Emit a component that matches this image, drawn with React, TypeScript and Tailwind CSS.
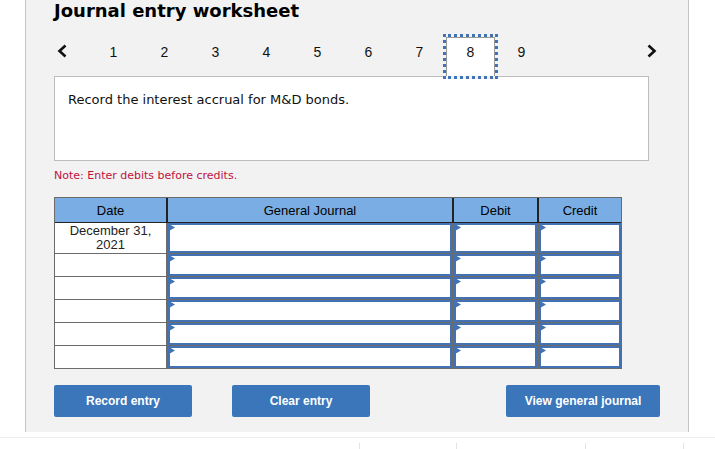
import React from "react";

const Flag = () => (
  <svg className="absolute left-[1px] top-[1px]" width="6" height="7" viewBox="0 0 6 7">
    <polygon points="0,0 6,3.5 0,7" fill="#3f73b6" />
  </svg>
);

const InputCell = ({ w }: { w: string }) => (
  <div className={`relative h-full border-l-2 border-[#6b6b6b] ${w}`}>
    <div className="h-full w-full border-2 border-[#4372b4] bg-white" />
    <Flag />
  </div>
);

const Row = ({ h, date }: { h: string; date?: React.ReactNode }) => (
  <div className={`flex ${h} border-t border-[#6b6b6b]`}>
    <div className="w-[111px] bg-white text-center text-[13px] leading-[15px] text-[#222] pt-[1px]">
      {date}
    </div>
    <InputCell w="w-[286px]" />
    <InputCell w="w-[85px]" />
    <InputCell w="w-[84px]" />
  </div>
);

const Chevron = ({ dir }: { dir: "l" | "r" }) => (
  <svg width="11" height="14" viewBox="0 0 11 14">
    {dir === "l" ? (
      <polyline points="8.5,1.5 2.5,7 8.5,12.5" fill="none" stroke="#111" strokeWidth="2.6" />
    ) : (
      <polyline points="2.5,1.5 8.5,7 2.5,12.5" fill="none" stroke="#111" strokeWidth="2.6" />
    )}
  </svg>
);

export default function App() {
  const nums = [1, 2, 3, 4, 5, 6, 7, 8, 9];
  return (
    <div className="relative w-[715px] h-[449px] bg-white overflow-hidden" style={{ fontFamily: '"Liberation Sans", Arial, sans-serif' }}>
      <div className="ml-[25px] w-[664px] h-[432px] bg-[#f2f2f2] border-x border-[#c6c6c6] pl-[28px]">
        <h1 className="h-[22px] leading-[22px] text-[18px] font-bold text-black" style={{ fontFamily: '"DejaVu Sans", Verdana, sans-serif' }}>
          Journal entry worksheet
        </h1>
        <div className="mt-[12px] flex h-[45px] items-start relative z-10">
          <div className="w-[34px] pl-[3px] pt-[10px] flex items-center">
            <Chevron dir="l" />
          </div>
          {nums.map((n) =>
            n === 8 ? (
              <div key={n} className="mx-[-2px] w-[55px] h-[45px] border-[3px] border-dotted border-[#3f73b6] bg-[#f2f2f2]">
                <div className="w-full h-full border-x border-t border-[#9a9a9a] bg-white text-center pt-[6px] leading-[16px] text-[14px] text-[#111]">
                  {n}
                </div>
              </div>
            ) : (
              <div key={n} className="w-[51px] pt-[10px] leading-[16px] text-center text-[14px] text-[#111]">
                {n}
              </div>
            )
          )}
          <div className="ml-[99px] pt-[10px] flex items-center">
            <Chevron dir="r" />
          </div>
        </div>
        <div className="mt-[-3px] w-[595px] h-[85px] bg-white border border-[#bdbdbd] pl-[13px] pt-[15px] text-[13px] leading-[16px] text-[#111]" style={{ fontFamily: '"DejaVu Sans", Verdana, sans-serif' }}>
          Record the interest accrual for M&amp;D bonds.
        </div>
        <div className="mt-[8px] h-[13px] leading-[13px] text-[11px] text-[#c0113e]" style={{ fontFamily: '"DejaVu Sans", Verdana, sans-serif' }}>
          Note: Enter debits before credits.
        </div>
        <div className="mt-[15px] w-[568px] border-x border-b border-t border-[#6b6b6b]">
          <div className="flex h-[24px] bg-[#7aade3] text-[13px] text-black leading-[25px]">
            <div className="w-[111px] text-center">Date</div>
            <div className="w-[286px] text-center border-l-2 border-[#222]">General Journal</div>
            <div className="w-[85px] text-center border-l-2 border-[#222]">Debit</div>
            <div className="w-[84px] text-center border-l-2 border-[#222]">Credit</div>
          </div>
          <div className="border-t border-[#222]">
            <div className="flex h-[30px]">
              <div className="w-[111px] bg-white text-center text-[13px] leading-[14px] text-[#222] pt-[1px]">
                December 31,
                <br />
                2021
              </div>
              <InputCell w="w-[286px]" />
              <InputCell w="w-[85px]" />
              <InputCell w="w-[84px]" />
            </div>
            <Row h="h-[23px]" />
            <Row h="h-[23px]" />
            <Row h="h-[23px]" />
            <Row h="h-[23px]" />
            <Row h="h-[23px]" />
          </div>
        </div>
        <div className="mt-[16px] flex h-[32px] text-[12px] font-bold text-white">
          <button className="w-[138px] h-[32px] rounded-[2px] bg-[#3a76b9]">Record entry</button>
          <button className="ml-[40px] w-[138px] h-[32px] rounded-[2px] bg-[#3a76b9]">Clear entry</button>
          <button className="ml-[136px] w-[154px] h-[32px] rounded-[2px] bg-[#3a76b9]">View general journal</button>
        </div>
      </div>
      <div className="mt-[5px] h-[1px] w-full bg-[#ececec]" />
      <div className="flex h-[7px] mt-[5px]">
        <div className="w-[359px]" />
        <div className="w-[1px] bg-[#e4e4e4]" />
        <div className="w-[96px]" />
        <div className="w-[1px] bg-[#e4e4e4]" />
        <div className="w-[128px]" />
        <div className="w-[1px] bg-[#e4e4e4]" />
        <div className="w-[97px]" />
        <div className="w-[1px] bg-[#e4e4e4]" />
      </div>
    </div>
  );
}
